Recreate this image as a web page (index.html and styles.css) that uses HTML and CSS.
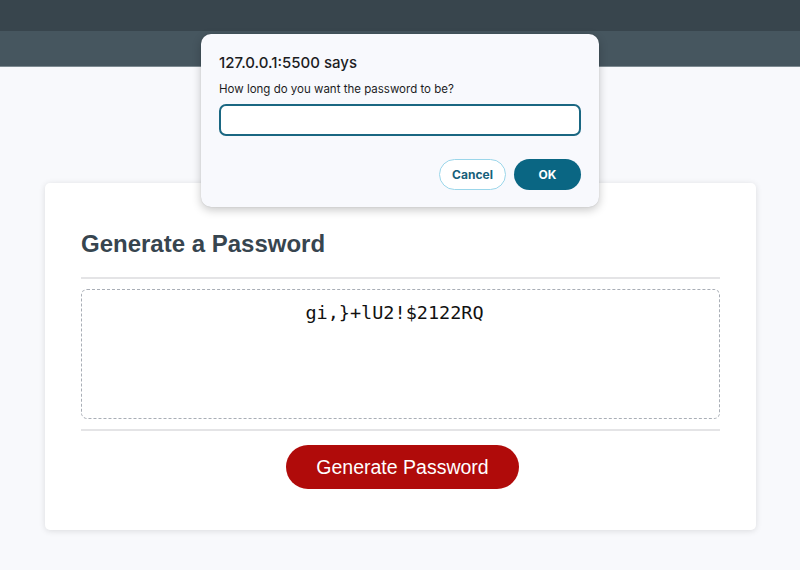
FILE: index.html
```html
<!DOCTYPE html>
<html>
<head>
<meta charset="utf-8">
<link rel="stylesheet" href="styles.css">
</head>
<body>
<header class="header">
  <div class="header-top"></div>
  <div class="header-bottom"></div>
</header>
<main class="main">
  <section class="card">
    <h2 class="card-title">Generate a Password</h2>
    <hr class="rule">
    <div class="output">gi,}+lU2!$2122RQ</div>
    <hr class="rule">
    <div class="actions">
      <button class="gen-btn">Generate Password</button>
    </div>
  </section>
</main>
<div class="dialog">
  <div class="dialog-title">127.0.0.1:5500 says</div>
  <div class="dialog-msg">How long do you want the password to be?</div>
  <div class="dialog-input"></div>
  <div class="dialog-buttons">
    <button class="btn-cancel">Cancel</button>
    <button class="btn-ok">OK</button>
  </div>
</div>
</body>
</html>
```

FILE: styles.css
```css
* { box-sizing: border-box; }
html, body { margin: 0; padding: 0; }
body {
  background: #f8f9fc;
  font-family: "Liberation Sans", Arial, sans-serif;
  width: 800px;
  height: 570px;
  overflow: hidden;
  position: relative;
}
.header { display: flex; flex-direction: column; }
.header-top { height: 31px; background: #38454d; }
.header-bottom { height: 36px; background: #46565f; border-bottom: 1px solid #7d8a91; }
.main { padding: 116px 44px 0 45px; }
.card {
  background: #fff;
  border-radius: 5px;
  box-shadow: 0 1px 6px rgba(0,0,0,0.12);
  padding: 46px 36px 41px;
  height: 347px;
}
.card-title {
  margin: 0;
  font-size: 24px;
  line-height: 30px;
  font-weight: 700;
  color: #37454f;
}
.rule {
  border: 0;
  height: 2px;
  background: #e4e4e6;
  margin: 0;
}
.card-title + .rule { margin-top: 18px; }
.output {
  margin: 10px 0;
  height: 130px;
  border: 1px dashed #a9aeb6;
  border-radius: 6px;
  text-align: center;
  font-family: "DejaVu Sans Mono", monospace;
  font-size: 18.5px;
  line-height: 22px;
  padding: 12px 12px 0 0;
  color: #111;
}
.actions { display: flex; justify-content: center; padding: 14px 0 0 4px; }
.gen-btn {
  width: 233px;
  height: 44px;
  border: 0;
  border-radius: 22px;
  background: #b00b0a;
  color: #fff;
  font-family: "Liberation Sans", Arial, sans-serif;
  font-size: 19.5px;
  padding: 0;
}
.dialog {
  position: absolute;
  left: 201px;
  top: 34px;
  width: 398px;
  height: 173px;
  background: #f8f9fd;
  border-radius: 10px;
  box-shadow: 0 3px 10px rgba(0,0,0,0.22), 0 0 1px rgba(0,0,0,0.2);
  padding: 19px 18px 0;
  font-family: Inter, "Noto Sans", sans-serif;
  color: #1d1d1f;
}
.dialog-title { font-size: 15px; line-height: 20px; font-weight: 500; }
.dialog-msg { font-size: 11.5px; line-height: 16px; margin-top: 8px; }
.dialog-input {
  margin-top: 7px;
  height: 32px;
  border: 2px solid #1a6782;
  border-radius: 7px;
  background: #fff;
}
.dialog-buttons {
  display: flex;
  justify-content: flex-end;
  gap: 8px;
  margin-top: 23px;
}
.btn-cancel, .btn-ok {
  width: 67px;
  height: 31px;
  border-radius: 16px;
  font-family: Inter, "Noto Sans", sans-serif;
  font-size: 12px;
  font-weight: 700;
  padding: 0;
}
.btn-cancel {
  background: #fff;
  border: 1px solid #9bd6ea;
  color: #17607a;
}
.btn-ok {
  background: #0a6683;
  border: 0;
  color: #fff;
}
```
